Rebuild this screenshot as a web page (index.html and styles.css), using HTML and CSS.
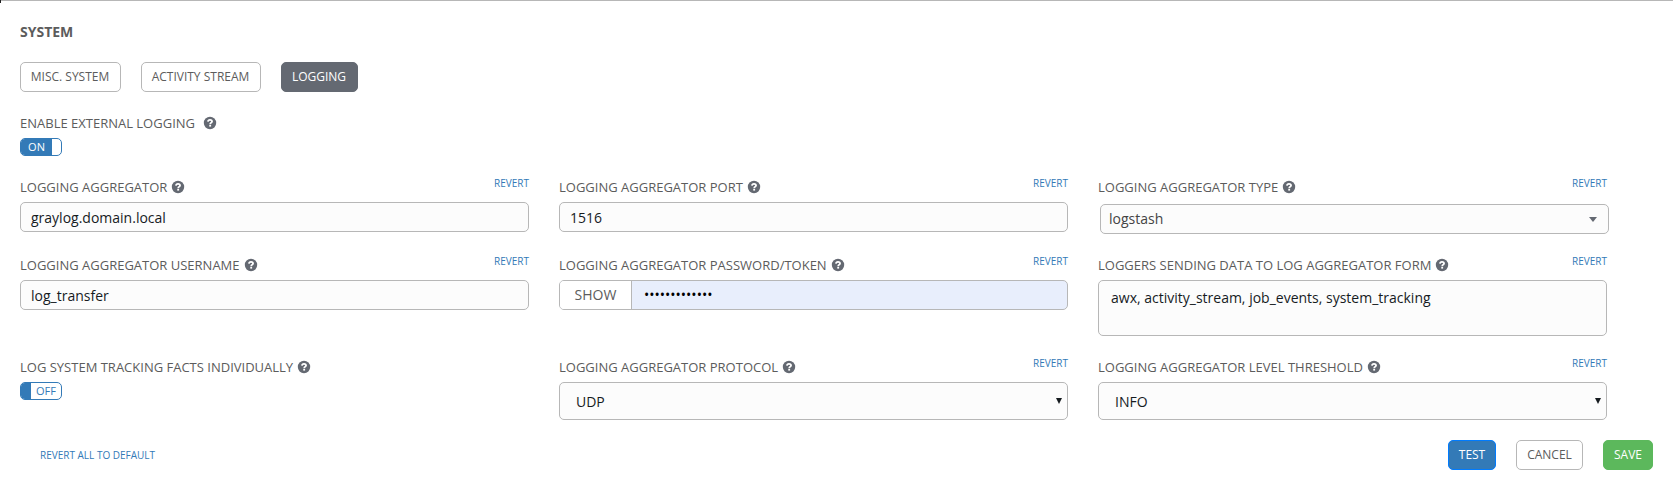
FILE: index.html
```html
<!DOCTYPE html>
<html lang="en">
<head>
<meta charset="utf-8">
<title>System settings</title>
<link rel="stylesheet" href="styles.css">
</head>
<body>
<svg class="defs" width="0" height="0"><symbol id="help" viewBox="0 0 12 12" overflow="visible"><circle cx="6" cy="6" r="6.200" fill="#646972"/><path d="M3.900 4.700C4.100 3.300 4.900 2.800 6 2.800c1.200 0 2.050.65 2.050 1.650C8.050 5.700 6.200 5.600 6.200 7.200" fill="none" stroke="#fff" stroke-width="1.800"/><rect x="5.250" y="7.900" width="1.850" height="1.700" fill="#fff"/></symbol></svg>
<main class="panel">
  <h1 class="title">SYSTEM</h1>
  <nav class="tabs">
    <button class="btn tab-misc">MISC. SYSTEM</button>
    <button class="btn tab-activity">ACTIVITY STREAM</button>
    <button class="btn tab-logging active">LOGGING</button>
  </nav>
  <section class="enable">
    <div class="label wide"><span>ENABLE EXTERNAL LOGGING</span><svg class="help"><use href="#help"/></svg></div>
    <div class="toggle on"><span class="state">ON</span><span class="knob"></span></div>
  </section>
  <section class="grid">
    <div class="field"><div class="head"><div class="label"><span>LOGGING AGGREGATOR</span><svg class="help"><use href="#help"/></svg></div><a class="revert">REVERT</a></div>
      <div class="input text">graylog.domain.local</div></div>
    <div class="field"><div class="head"><div class="label"><span>LOGGING AGGREGATOR PORT</span><svg class="help"><use href="#help"/></svg></div><a class="revert">REVERT</a></div>
      <div class="input text">1516</div></div>
    <div class="field"><div class="head"><div class="label"><span>LOGGING AGGREGATOR TYPE</span><svg class="help"><use href="#help"/></svg></div><a class="revert">REVERT</a></div>
      <div class="input picker"><span>logstash</span><svg width="8" height="5"><path d="M0 0h8L4 5z" fill="#646972"/></svg></div></div>

    <div class="field"><div class="head"><div class="label"><span>LOGGING AGGREGATOR USERNAME</span><svg class="help"><use href="#help"/></svg></div><a class="revert">REVERT</a></div>
      <div class="input text">log_transfer</div></div>
    <div class="field"><div class="head"><div class="label"><span>LOGGING AGGREGATOR PASSWORD/TOKEN</span><svg class="help"><use href="#help"/></svg></div><a class="revert">REVERT</a></div>
      <div class="input secret"><span class="show">SHOW</span><span class="dots">•••••••••••••</span></div></div>
    <div class="field"><div class="head"><div class="label"><span>LOGGERS SENDING DATA TO LOG AGGREGATOR FORM</span><svg class="help"><use href="#help"/></svg></div><a class="revert">REVERT</a></div>
      <div class="input area">awx, activity_stream, job_events, system_tracking</div></div>

    <div class="field"><div class="head"><div class="label"><span>LOG SYSTEM TRACKING FACTS INDIVIDUALLY</span><svg class="help"><use href="#help"/></svg></div></div>
      <div class="toggle off"><span class="knob"></span><span class="state">OFF</span></div></div>
    <div class="field"><div class="head"><div class="label"><span>LOGGING AGGREGATOR PROTOCOL</span><svg class="help"><use href="#help"/></svg></div><a class="revert">REVERT</a></div>
      <div class="input select"><span>UDP</span><svg width="6" height="6"><path d="M0 0h6L3 6z" fill="#161b1f"/></svg></div></div>
    <div class="field"><div class="head"><div class="label"><span>LOGGING AGGREGATOR LEVEL THRESHOLD</span><svg class="help"><use href="#help"/></svg></div><a class="revert">REVERT</a></div>
      <div class="input select"><span>INFO</span><svg width="6" height="6"><path d="M0 0h6L3 6z" fill="#161b1f"/></svg></div></div>
  </section>
  <footer class="footer">
    <a class="revert-all">REVERT ALL TO DEFAULT</a>
    <div class="actions">
      <button class="btn test">TEST</button>
      <button class="btn cancel">CANCEL</button>
      <button class="btn save">SAVE</button>
    </div>
  </footer>
</main>
</body>
</html>
```

FILE: styles.css
```css
* { box-sizing: border-box; }
body { margin: 0; background: #fff; font-family: "Open Sans", sans-serif; color: #161b1f; }
.defs { display: block; }
.panel { height: 489px; padding: 0 20px; border-top: 1px solid #b7b7b7; }
/* dark tick in the panel's top-left corner */
.panel::before { content: ""; position: absolute; left: 0; top: 0; width: 1px; height: 3px; background: #222; }
.title { margin: 0; padding-top: 21px; height: 61px; font-size: 14px; line-height: 20px; font-weight: 700; color: #5c5c5c; }
.tabs { display: flex; gap: 20px; }
.btn { height: 30px; padding: 0; border: 1px solid #b7b7b7; border-radius: 5px; background: #fff; color: #5c5c5c; font: 12px/28px "Open Sans", sans-serif; text-align: center; }
.tab-misc { width: 101px; }
.tab-activity { width: 120px; }
.tab-logging { width: 77px; }
.tabs .btn { padding-right: 1px; }
.btn.active { background: #646972; border-color: #646972; color: #fff; }
.enable { height: 82px; padding-top: 22px; }
.label { display: flex; align-items: center; gap: 5px; height: 18px; font-size: 13px; line-height: 18px; color: #5c5c5c; white-space: nowrap; }
.label.wide { gap: 9px; }
.help { width: 12px; height: 12px; overflow: visible; }
.toggle { display: flex; width: 42px; height: 18px; border: 1px solid #337ab7; border-radius: 5px; overflow: hidden; font-size: 11px; line-height: 16px; text-align: center; }
.enable .toggle { margin-top: 6px; }
.toggle .state { width: 31px; }
.off .state { width: 30px; }
.toggle .knob { flex: 1; }
.on .state, .off .knob { background: #337ab7; color: #fff; }
.off .state { color: #337ab7; }
.grid { display: grid; grid-template-columns: repeat(3, 509px); grid-template-rows: 78px 102px 86px; column-gap: 30px; }
.head { display: flex; justify-content: space-between; height: 28px; padding-top: 4px; }
.revert { font-size: 10px; line-height: 18px; margin-top: -4px; color: #337ab7; }
.input { display: flex; align-items: center; height: 30px; padding: 0 10px; border: 1px solid #b7b7b7; border-radius: 5px; background: #fcfcfc; font-size: 14px; line-height: 20px; }
.text { padding-top: 2px; }
.picker { margin: 2px -2px 0 2px; padding: 0 11px 0 8px; justify-content: space-between; color: #444; }
.secret { padding: 0; overflow: hidden; background: #e8eefc; }
.show { width: 72px; line-height: 28px; background: #fff; border-right: 1px solid #b7b7b7; color: #5c5c5c; text-align: center; }
.dots { padding-left: 12px; color: #000; }
.area { height: 56px; align-items: flex-start; padding: 7px 12px; }
.select { height: 38px; padding: 0 5px 0 16px; justify-content: space-between; }
.select span { padding-top: 2px; }
.footer { display: flex; justify-content: space-between; align-items: center; height: 30px; }
.revert-all { margin-left: 20px; font-size: 10px; color: #337ab7; }
.actions { display: flex; gap: 20px; }
.test { width: 48px; background: #337ab7; border-color: #007bff; color: #fff; }
.cancel { width: 67px; }
.save { width: 50px; background: #5cb85c; border-color: #5cb85c; color: #fff; }
```
